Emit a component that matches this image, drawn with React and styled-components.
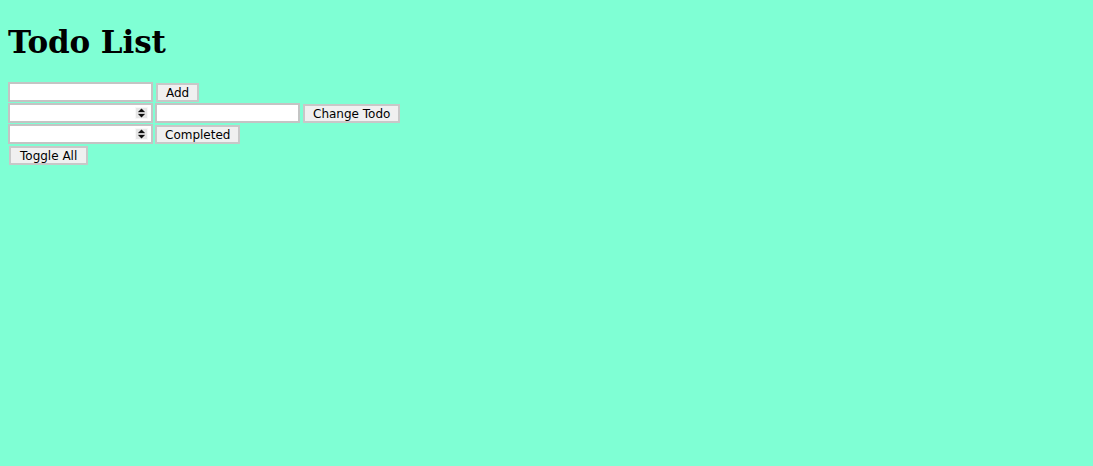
import React, { useState } from 'react';
import styled, { createGlobalStyle } from 'styled-components';

const GlobalStyle = createGlobalStyle`
  html, body {
    margin: 0;
    background: #7fffd4;
  }
  body {
    padding: 8px;
    font-family: "DejaVu Sans", sans-serif;
  }
`;

const Page = styled.div`
  display: flex;
  flex-direction: column;
`;

const Title = styled.h1`
  font-family: "DejaVu Serif", serif;
  font-weight: bold;
  font-size: 31px;
  letter-spacing: -0.1px;
  line-height: 36px;
  margin: 16px 0 22px;
  color: #000;
`;

const Row = styled.div`
  display: flex;
  align-items: center;
  gap: 3px;
  height: 20px;
  margin-bottom: 1px;
  padding-left: ${p => p.$indent || 0}px;
`;

const Field = styled.input`
  box-sizing: border-box;
  width: 145px;
  height: 20px;
  border: 2px solid #c4c4c4;
  background: #fff;
  padding: 0 3px;
  font-family: "DejaVu Sans", sans-serif;
  font-size: 12px;
  outline: none;
`;

const NumberBox = styled.div`
  box-sizing: border-box;
  width: 145px;
  height: 20px;
  margin-right: -1px;
  border: 2px solid #c4c4c4;
  background: #fff;
  display: flex;
  align-items: center;
  padding-right: 3px;
`;

const NumberField = styled.input`
  flex: 1;
  min-width: 0;
  border: none;
  outline: none;
  background: transparent;
  padding: 0 3px;
  font-family: "DejaVu Sans", sans-serif;
  font-size: 12px;
`;

const Spinner = styled.span`
  width: 13px;
  height: 12px;
  background: #e6e6e6;
  border: 1px solid #f8f8f8;
  box-sizing: border-box;
  display: flex;
  align-items: center;
  justify-content: center;
`;

const Button = styled.button`
  box-sizing: border-box;
  height: 19px;
  margin: 0;
  padding: 1px ${p => p.$pad || 8}px 0;
  border: 2px solid #c8c8c8;
  background: #f0f0f0;
  color: #000;
  font-family: "DejaVu Sans", sans-serif;
  font-size: 12px;
  line-height: 14px;
  cursor: pointer;
`;

function Spin() {
  return (
    <Spinner>
      <svg width="7" height="10" viewBox="0 0 7 10">
        <path d="M3.5 0.5 L7 4 L0 4 Z" fill="#111" />
        <rect x="0" y="4.5" width="7" height="1" fill="#a8a8a8" />
        <path d="M0 6 L7 6 L3.5 9.5 Z" fill="#111" />
      </svg>
    </Spinner>
  );
}

export default function App() {
  const [text, setText] = useState('');
  const [index, setIndex] = useState('');
  const [change, setChange] = useState('');
  const [done, setDone] = useState('');

  return (
    <Page>
      <GlobalStyle />
      <Title>Todo List</Title>
      <Row>
        <Field value={text} onChange={e => setText(e.target.value)} />
        <Button>Add</Button>
      </Row>
      <Row>
        <NumberBox>
          <NumberField value={index} onChange={e => setIndex(e.target.value)} />
          <Spin />
        </NumberBox>
        <Field value={change} onChange={e => setChange(e.target.value)} />
        <Button>Change Todo</Button>
      </Row>
      <Row>
        <NumberBox>
          <NumberField value={done} onChange={e => setDone(e.target.value)} />
          <Spin />
        </NumberBox>
        <Button>Completed</Button>
      </Row>
      <Row $indent={1}>
        <Button $pad={9}>Toggle All</Button>
      </Row>
    </Page>
  );
}
